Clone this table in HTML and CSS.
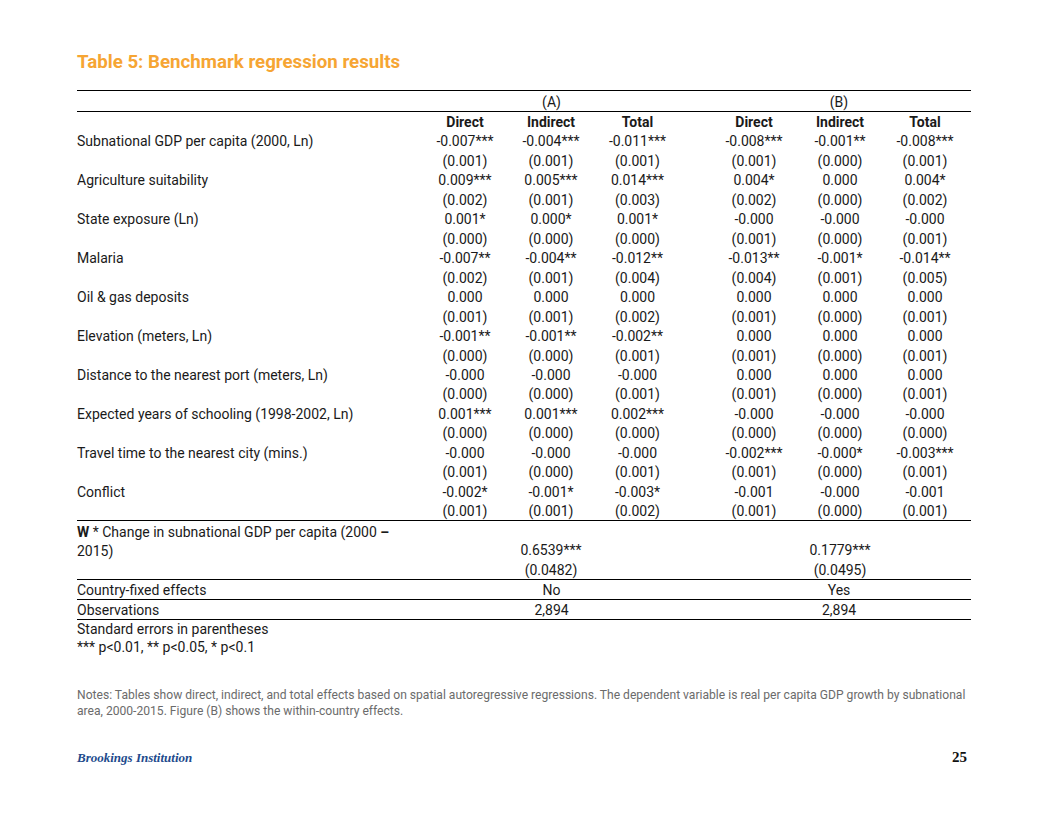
FILE: index.html
```html
<!DOCTYPE html>
<html lang="en">
<head>
<meta charset="utf-8">
<title>Table 5: Benchmark regression results</title>
<link rel="stylesheet" href="styles.css">
</head>
<body>
<div class="page">
  <h1 class="title">Table 5: Benchmark regression results</h1>
  <table class="reg">
    <colgroup>
      <col class="c-label">
      <col class="c-num"><col class="c-num"><col class="c-num3">
      <col class="c-gap">
      <col class="c-num"><col class="c-num"><col class="c-num6">
    </colgroup>
    <thead>
      <tr class="grp">
        <th></th>
        <th colspan="3">(A)</th>
        <th></th>
        <th colspan="3" class="last">(B)</th>
      </tr>
      <tr class="hdr">
        <th></th>
        <th>Direct</th><th>Indirect</th><th>Total</th>
        <th></th>
        <th>Direct</th><th>Indirect</th><th class="last">Total</th>
      </tr>
    </thead>
    <tbody class="coefs">
      <tr><td class="lbl">Subnational GDP per capita (2000, Ln)</td><td>-0.007***</td><td>-0.004***</td><td>-0.011***</td><td></td><td>-0.008***</td><td>-0.001**</td><td class="last">-0.008***</td></tr>
      <tr><td></td><td>(0.001)</td><td>(0.001)</td><td>(0.001)</td><td></td><td>(0.001)</td><td>(0.000)</td><td class="last">(0.001)</td></tr>
      <tr><td class="lbl">Agriculture suitability</td><td>0.009***</td><td>0.005***</td><td>0.014***</td><td></td><td>0.004*</td><td>0.000</td><td class="last">0.004*</td></tr>
      <tr><td></td><td>(0.002)</td><td>(0.001)</td><td>(0.003)</td><td></td><td>(0.002)</td><td>(0.000)</td><td class="last">(0.002)</td></tr>
      <tr><td class="lbl">State exposure (Ln)</td><td>0.001*</td><td>0.000*</td><td>0.001*</td><td></td><td>-0.000</td><td>-0.000</td><td class="last">-0.000</td></tr>
      <tr><td></td><td>(0.000)</td><td>(0.000)</td><td>(0.000)</td><td></td><td>(0.001)</td><td>(0.000)</td><td class="last">(0.001)</td></tr>
      <tr><td class="lbl">Malaria</td><td>-0.007**</td><td>-0.004**</td><td>-0.012**</td><td></td><td>-0.013**</td><td>-0.001*</td><td class="last">-0.014**</td></tr>
      <tr><td></td><td>(0.002)</td><td>(0.001)</td><td>(0.004)</td><td></td><td>(0.004)</td><td>(0.001)</td><td class="last">(0.005)</td></tr>
      <tr><td class="lbl">Oil &amp; gas deposits</td><td>0.000</td><td>0.000</td><td>0.000</td><td></td><td>0.000</td><td>0.000</td><td class="last">0.000</td></tr>
      <tr><td></td><td>(0.001)</td><td>(0.001)</td><td>(0.002)</td><td></td><td>(0.001)</td><td>(0.000)</td><td class="last">(0.001)</td></tr>
      <tr><td class="lbl">Elevation (meters, Ln)</td><td>-0.001**</td><td>-0.001**</td><td>-0.002**</td><td></td><td>0.000</td><td>0.000</td><td class="last">0.000</td></tr>
      <tr><td></td><td>(0.000)</td><td>(0.000)</td><td>(0.001)</td><td></td><td>(0.001)</td><td>(0.000)</td><td class="last">(0.001)</td></tr>
      <tr><td class="lbl">Distance to the nearest port (meters, Ln)</td><td>-0.000</td><td>-0.000</td><td>-0.000</td><td></td><td>0.000</td><td>0.000</td><td class="last">0.000</td></tr>
      <tr><td></td><td>(0.000)</td><td>(0.000)</td><td>(0.001)</td><td></td><td>(0.001)</td><td>(0.000)</td><td class="last">(0.001)</td></tr>
      <tr><td class="lbl">Expected years of schooling (1998-2002, Ln)</td><td>0.001***</td><td>0.001***</td><td>0.002***</td><td></td><td>-0.000</td><td>-0.000</td><td class="last">-0.000</td></tr>
      <tr><td></td><td>(0.000)</td><td>(0.000)</td><td>(0.000)</td><td></td><td>(0.000)</td><td>(0.000)</td><td class="last">(0.000)</td></tr>
      <tr><td class="lbl">Travel time to the nearest city (mins.)</td><td>-0.000</td><td>-0.000</td><td>-0.000</td><td></td><td>-0.002***</td><td>-0.000*</td><td class="last">-0.003***</td></tr>
      <tr><td></td><td>(0.001)</td><td>(0.000)</td><td>(0.001)</td><td></td><td>(0.001)</td><td>(0.000)</td><td class="last">(0.001)</td></tr>
      <tr><td class="lbl">Conflict</td><td>-0.002*</td><td>-0.001*</td><td>-0.003*</td><td></td><td>-0.001</td><td>-0.000</td><td class="last">-0.001</td></tr>
      <tr><td></td><td>(0.001)</td><td>(0.001)</td><td>(0.002)</td><td></td><td>(0.001)</td><td>(0.000)</td><td class="last">(0.001)</td></tr>
    </tbody>
    <tbody class="spatial">
      <tr><td class="lbl wlbl"><b>W</b> * Change in subnational GDP per capita (2000 <b>&ndash;</b></td><td></td><td></td><td></td><td></td><td></td><td></td><td class="last"></td></tr>
      <tr><td class="lbl wlbl">2015)</td><td></td><td>0.6539***</td><td></td><td></td><td></td><td>0.1779***</td><td class="last"></td></tr>
      <tr><td></td><td></td><td>(0.0482)</td><td></td><td></td><td></td><td>(0.0495)</td><td class="last"></td></tr>
    </tbody>
    <tbody class="summary">
      <tr><td class="lbl">Country-fixed effects</td><td colspan="3">No</td><td></td><td colspan="3" class="last">Yes</td></tr>
      <tr><td class="lbl">Observations</td><td colspan="3">2,894</td><td></td><td colspan="3" class="last">2,894</td></tr>
    </tbody>
  </table>
  <div class="legend">
    <p>Standard errors in parentheses</p>
    <p>*** p&lt;0.01, ** p&lt;0.05, * p&lt;0.1</p>
  </div>
  <p class="notes">Notes: Tables show direct, indirect, and total effects based on spatial autoregressive regressions. The dependent variable is real per capita GDP growth by subnational area, 2000-2015. Figure (B) shows the within-country effects.</p>
  <footer class="footer">
    <span class="brand">Brookings Institution</span>
    <span class="pageno">25</span>
  </footer>
</div>
</body>
</html>
```

FILE: styles.css
```css
html, body {
  margin: 0;
  padding: 0;
  background: #ffffff;
}

.page {
  width: 1056px;
  height: 816px;
  box-sizing: border-box;
  padding: 51px 85px 0 77px;
  font-family: Roboto, "Liberation Sans", sans-serif;
  color: #1a1a1a;
}

.title {
  margin: 0 0 17px 0;
  font-size: 18.7px;
  line-height: 22px;
  font-weight: 700;
  color: #f6a533;
}

.reg {
  width: 894px;
  border-collapse: collapse;
  table-layout: fixed;
  font-size: 14px;
  border-top: 1px solid #000;
}

.c-label { width: 345px; }
.c-num { width: 86px; }
.c-num3 { width: 87px; }
.c-gap { width: 30px; }
.c-num6 { width: 88px; }

.reg th,
.reg td {
  box-sizing: border-box;
  padding: 0;
  text-align: center;
  white-space: nowrap;
  vertical-align: top;
}

.reg .last {
  padding-right: 4px;
}

.reg .lbl {
  text-align: left;
}

.grp th {
  font-weight: 400;
  height: 19.5px;
  padding-top: 1.5px;
  line-height: 18px;
  border-bottom: 1px solid #000;
}

.hdr th {
  font-weight: 700;
  height: 19.5px;
  padding-top: 1px;
  line-height: 18.5px;
}

.coefs td {
  height: 19.47px;
  padding-top: 2.4px;
  line-height: 17px;
}

.coefs tr:last-child td {
  border-bottom: 1px solid #000;
}

.spatial td {
  height: 19.33px;
  padding-top: 1.6px;
  line-height: 17.7px;
}

.spatial td.wlbl {
  padding-top: 2.8px;
  line-height: 16.5px;
}

.spatial tr:last-child td {
  border-bottom: 1px solid #000;
}

.summary td {
  height: 19px;
  padding-top: 2px;
  line-height: 17px;
  border-bottom: 1px solid #000;
}

.legend {
  font-size: 14px;
  line-height: 18.5px;
  margin-top: -0.5px;
}

.legend p {
  margin: 0;
}

.notes {
  margin: 30.5px 0 0 0;
  font-size: 12.1px;
  line-height: 16px;
  color: #6b6b6b;
}

.footer {
  display: flex;
  justify-content: space-between;
  align-items: baseline;
  margin-top: 30px;
  padding-right: 4px;
}

.brand {
  font-family: "Liberation Serif", "DejaVu Serif", serif;
  font-weight: 700;
  font-style: italic;
  font-size: 13px;
  color: #224a8c;
}

.pageno {
  font-family: "Liberation Serif", "DejaVu Serif", serif;
  font-weight: 700;
  font-size: 15px;
  color: #111;
}
```
